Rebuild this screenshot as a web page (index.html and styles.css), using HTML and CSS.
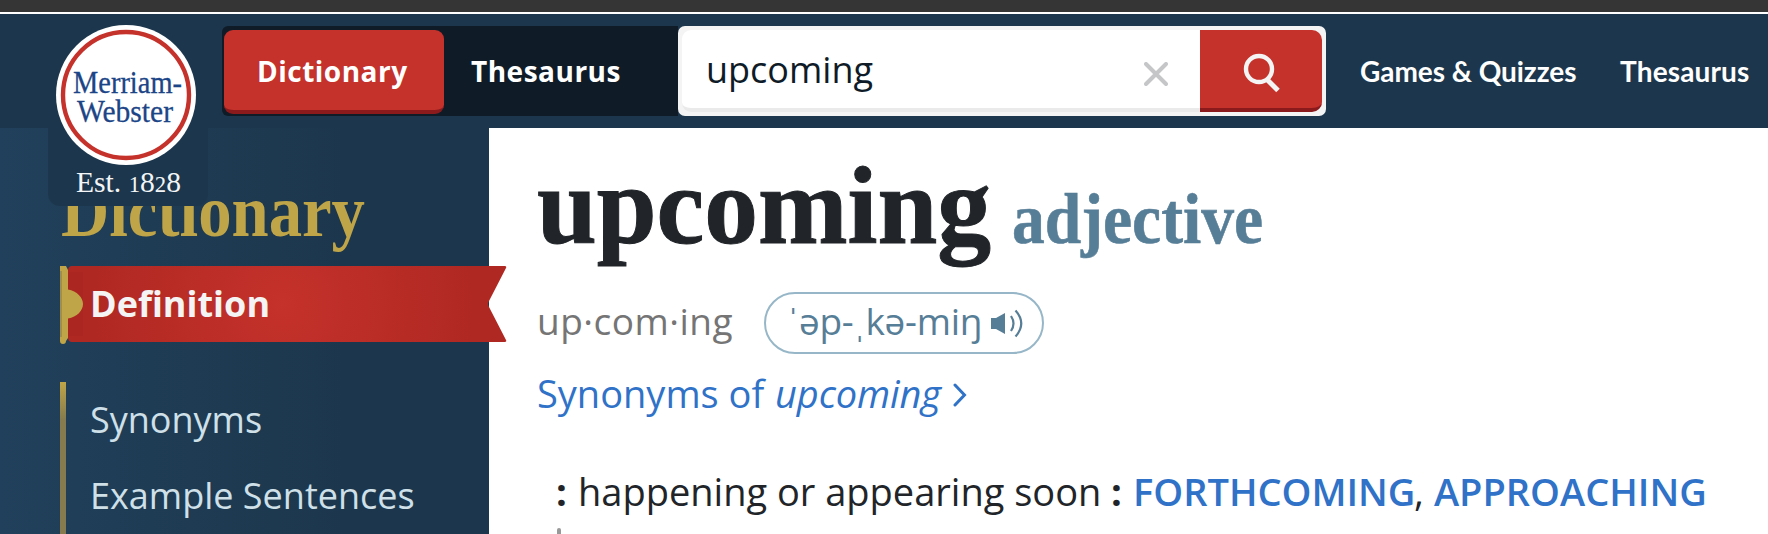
FILE: index.html
```html
<!DOCTYPE html>
<html lang="en">
<head>
<meta charset="utf-8">
<title>Upcoming Definition &amp; Meaning - Merriam-Webster</title>
<link rel="stylesheet" href="styles.css">
</head>
<body>
<div class="page">
  <div class="strip"></div>
  <header class="header">
    <a class="brand">
      <svg width="160" height="192" viewBox="48 14 160 192">
        <circle cx="126" cy="95" r="70" fill="#fff"/>
        <circle cx="126" cy="95" r="63" fill="none" stroke="#c5312b" stroke-width="4.4"/>
        <g class="brand-name">
          <text x="73" y="93" textLength="109" lengthAdjust="spacingAndGlyphs">Merriam-</text>
          <text x="77" y="122" textLength="96" lengthAdjust="spacingAndGlyphs">Webster</text>
        </g>
        <text class="brand-est" x="76" y="192" textLength="105" lengthAdjust="spacingAndGlyphs">Est. <tspan class="osf">1</tspan>8<tspan class="osf">2</tspan>8</text>
      </svg>
    </a>
    <div class="tabs">
      <a class="tab tab-active">Dictionary</a>
      <a class="tab">Thesaurus</a>
    </div>
    <div class="search">
      <div class="field">
        <span class="query">upcoming</span>
        <svg class="clear" width="24" height="24" viewBox="0 0 24 24"><path d="M2 2L22 22M22 2L2 22"/></svg>
      </div>
      <div class="go">
        <svg width="38" height="42" viewBox="0 0 38 42"><circle cx="16" cy="16" r="13"/><path d="M24.5 27L35 37.6" stroke-width="5"/></svg>
      </div>
    </div>
    <nav class="links"><a class="games">Games &amp; Quizzes</a><a class="thes">Thesaurus</a></nav>
  </header>
  <div class="body">
    <aside class="sidebar">
      <svg class="side-title" width="310" height="80" viewBox="0 0 310 80"><text x="0" y="50" textLength="304" lengthAdjust="spacingAndGlyphs">Dictionary</text></svg>
      <div class="ribbon">
        <svg class="ribbon-bg" width="448" height="80" viewBox="0 0 448 80">
          <defs>
            <radialGradient id="red" gradientUnits="userSpaceOnUse" cx="223" cy="38" r="190">
              <stop offset="0" stop-color="#c5312b"/><stop offset="1" stop-color="#b02822"/>
            </radialGradient>
          </defs>
          <path d="M12 0H444.500Q447 0 446 2L428.500 36Q427.500 38 428.500 40L446 74Q447 76 444.500 76H12Q8 76 8 71V5Q8 0 12 0Z" fill="url(#red)"/>
          <path d="M8 6H23V70H8Z" fill="#a82420" opacity=".5"/>
          <path d="M0 0H6L8 4V23.500C17 25 23 31.500 23 38S17 51 8 52.500V72L6 75Q6 78 3 78T0 75Z" fill="#bfa548"/>
          <path d="M0 5H2V71H0Z" fill="#a08f4c"/>
        </svg>
        <span class="ribbon-label">Definition</span>
      </div>
      <div class="menu">
        <a class="item synonyms">Synonyms</a>
        <a class="item examples">Example Sentences</a>
      </div>
    </aside>
    <main class="entry">
      <svg class="headword" width="740" height="140" viewBox="0 0 740 140">
        <text class="word" x="0" y="115" textLength="454" lengthAdjust="spacingAndGlyphs">upcoming</text>
        <text class="pos" x="475" y="115" textLength="251" lengthAdjust="spacingAndGlyphs">adjective</text>
      </svg>
      <div class="pron-row">
        <span class="syllables">up·com·ing</span>
        <a class="pron"><span class="ipa">ˈəp-ˌkə-miŋ</span>
          <svg width="33" height="30" viewBox="0 0 33 30"><path d="M0 9H5L14 4V25L5 20H0Z" fill="#577e97"/><path d="M20 7Q25 14.500 20 22M24.500 1.500Q36 14.500 24.500 27.500" fill="none" stroke="#577e97" stroke-width="2.200"/></svg>
        </a>
      </div>
      <div class="syn-row"><span class="syn-of">Synonyms of</span><em class="syn-word">upcoming</em>
        <svg width="14" height="24" viewBox="0 0 14 24"><path d="M2 2L11.500 12L2 22"/></svg>
      </div>
      <div class="sense"><b class="colon">:</b><span class="gloss">happening or appearing soon</span><b class="colon second">:</b><a class="ref forth">FORTHCOMING</a><span class="comma">,</span><a class="ref appr">APPROACHING</a></div>
      <div class="rule"></div>
    </main>
  </div>
</div>
</body>
</html>
```
FILE: styles.css
```css
* { box-sizing: border-box; }
body { margin: 0; font-family: "Open Sans", sans-serif; background: #fff; }
.page { width: 1768px; height: 534px; overflow: hidden; }
.strip { height: 14px; background: #353535; border-bottom: 2px solid #fff; }
.header { position: relative; z-index: 2; display: flex; height: 114px; padding: 12px 0 0 222px; background: #1c374d; }
/* The logo plate hangs over the sidebar. */
.brand { position: absolute; left: 48px; top: 0; width: 160px; height: 192px; background: #1c374d; border-radius: 0 0 12px 12px; }
.brand svg { display: block; }
.brand-name { font: 32px "Liberation Serif", serif; fill: #1c4587; stroke: #1c4587; stroke-width: .3px; }
.brand-est { font: 30px "Liberation Serif", serif; fill: #f3f5f6; }
.osf { font-size: 23px; }
.tabs { display: flex; width: 456px; height: 90px; padding: 4px 0 0 2px; background: #0f1c28; border-radius: 6px 0 0 6px; }
.tab { padding-left: 27px; font-size: 28px; font-weight: 700; line-height: 83px; letter-spacing: .5px; color: #fff; white-space: nowrap; }
.tab-active { width: 220px; height: 84px; padding-left: 33px; background: #c5312b; border-bottom: 4px solid #8b1a1d; border-radius: 9px; }
.search { display: flex; width: 648px; height: 90px; padding: 4px; background: #f4f4f4; border-radius: 7px; }
.field { display: flex; width: 518px; height: 82px; justify-content: space-between; padding: 0 32px 0 24px; background: #fff; border-bottom: 4px solid #eaeaea; border-radius: 9px 0 0 9px; }
.query { font-size: 36px; line-height: 80px; color: #0f1c28; }
.clear { margin-top: 32px; fill: none; stroke: #c4c6c8; stroke-width: 4; stroke-linecap: round; }
.go { width: 122px; height: 82px; padding: 23px 0 0 43px; background: #c5312b; border-bottom: 4px solid #8b1a1d; border-radius: 0 10px 10px 0; }
.go svg { display: block; fill: none; stroke: #f4f4f4; stroke-width: 4.4; }
.links { display: flex; padding-left: 34px; font: 700 28px/91px Lato, sans-serif; color: #fff; white-space: nowrap; }
.games { width: 260px; letter-spacing: -.05px; }
.thes { letter-spacing: .15px; }
.body { display: flex; height: 406px; }
.sidebar { position: relative; z-index: 1; width: 489px; padding: 58px 0 0 60px; background: linear-gradient(90deg, #21405b, #1c374d 70%); }
.side-title { display: block; overflow: visible; margin-left: 1px; font: 700 73px "Liberation Serif", serif; fill: #bfa548; }
.ribbon { position: relative; width: 448px; height: 116px; }
.ribbon-bg { position: absolute; left: 0; top: 0; }
.ribbon-label { position: relative; display: block; padding-left: 30px; font-size: 36px; font-weight: 700; line-height: 76px; color: #f4f4f4; }
.menu { height: 152px; padding-left: 24px; border-left: 6px solid; border-image: linear-gradient(#bfa548, #857b4e 38px) 0 0 0 6; }
.item { display: block; height: 76px; font-size: 36px; line-height: 75px; color: #cfe0e9; }
.entry { padding-left: 48px; }
.headword { display: block; overflow: visible; height: 140px; }
.word { font: 700 111px "Liberation Serif", serif; fill: #212529; stroke: #212529; stroke-width: 1px; }
.pos { font: 700 71px "Liberation Serif", serif; fill: #577e97; stroke: #577e97; stroke-width: .6px; }
.pron-row { display: flex; height: 62px; margin-top: 24px; }
.syllables { width: 227px; font-size: 37px; line-height: 58px; letter-spacing: .5px; color: #757575; }
.pron { display: flex; width: 280px; height: 62px; padding-left: 21px; border: 2px solid #97b7c8; border-radius: 31px; color: #577e97; }
.ipa { width: 204px; font-size: 37px; line-height: 54px; letter-spacing: -.3px; white-space: nowrap; }
.pron svg { margin-top: 15px; }
.syn-row { display: flex; height: 66px; margin-top: 6px; font-size: 38px; line-height: 66px; color: #2f72c8; white-space: nowrap; }
.syn-of { width: 238px; }
.syn-word { width: 178px; letter-spacing: -.1px; }
.syn-row svg { margin-top: 23px; fill: none; stroke: #2f72c8; stroke-width: 3; stroke-linecap: round; }
.sense { display: flex; height: 66px; margin-top: 32px; padding-left: 19px; font-size: 38px; line-height: 66px; color: #212529; white-space: nowrap; }
.colon { width: 22px; }
.gloss { width: 533px; }
.second { width: 22px; }
.ref { font-weight: 600; color: #2f72c8; }
.forth { width: 281px; }
.comma { width: 20px; }
.rule { width: 4px; height: 12px; margin: 4px 0 0 20px; background: #999; border-radius: 2px 2px 0 0; }
```
